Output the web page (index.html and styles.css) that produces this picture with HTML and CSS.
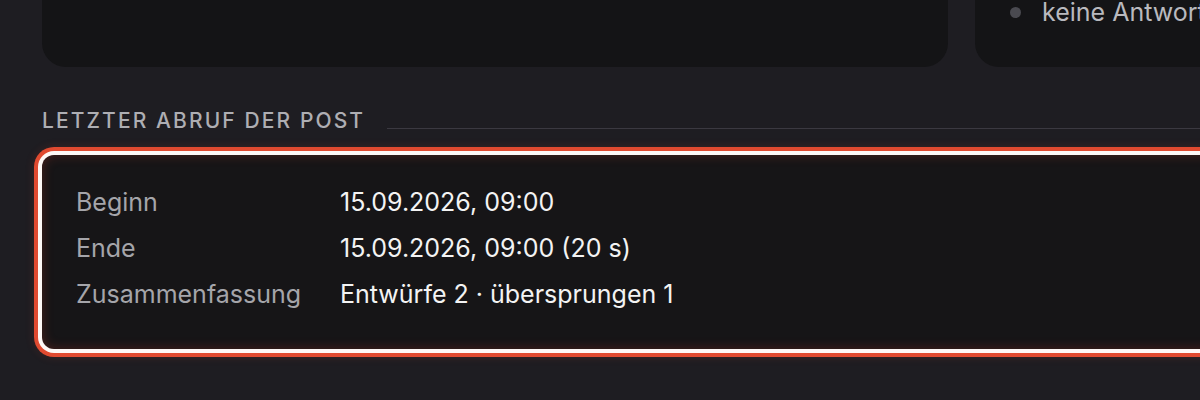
FILE: index.html
```html
<!DOCTYPE html>
<html lang="de">
<head>
<meta charset="utf-8">
<title>Letzter Abruf</title>
<link rel="stylesheet" href="styles.css">
</head>
<body>
<div class="page">
  <div class="top-row">
    <div class="card card-left"></div>
    <div class="card card-right">
      <ul class="status-list">
        <li><span class="dot"></span><span>keine Antwort</span></li>
      </ul>
    </div>
  </div>

  <div class="section-head">
    <h2>LETZTER ABRUF DER POST</h2>
    <div class="rule"></div>
  </div>

  <div class="run-card">
    <div class="row"><div class="label">Beginn</div><div class="value">15.09.2026, 09:00</div></div>
    <div class="row"><div class="label">Ende</div><div class="value">15.09.2026, 09:00 (20 s)</div></div>
    <div class="row"><div class="label">Zusammenfassung</div><div class="value">Entwürfe 2 · übersprungen 1</div></div>
  </div>
</div>
</body>
</html>
```

FILE: styles.css
```css
html, body {
  margin: 0;
  padding: 0;
  background: #1e1d22;
  overflow: hidden;
  height: 400px;
}
body {
  font-family: Inter, "Noto Sans", sans-serif;
  color: #f0f0f2;
}
.page {
  width: 1400px;
  padding-left: 42px;
}
.top-row {
  display: grid;
  grid-template-columns: 906px 400px;
  column-gap: 27px;
  margin-top: -60px;
}
.card {
  background: #141416;
  border-radius: 24px;
  height: 127px;
}
.status-list {
  list-style: none;
  margin: 0;
  padding: 58px 0 0 35px;
}
.status-list li {
  display: flex;
  align-items: center;
  gap: 21px;
  height: 28px;
  font-size: 25px;
  color: #b9b9be;
  white-space: nowrap;
}
.dot {
  flex: none;
  width: 11px;
  height: 11px;
  border-radius: 50%;
  background: #4a4a50;
}
.section-head {
  display: flex;
  align-items: flex-end;
  gap: 22px;
  margin-top: 41px;
  height: 26px;
}
.section-head h2 {
  margin: 0;
  font-size: 21px;
  font-weight: 500;
  letter-spacing: 2.1px;
  color: #aeaeb3;
  line-height: 26px;
  white-space: nowrap;
}
.rule {
  flex: 1;
  height: 1px;
  background: #3b3941;
  margin-bottom: 5px;
}
.run-card {
  margin-top: 21px;
  width: 1300px;
  background: #161517;
  border-radius: 12px;
  padding: 24px 0 32px 34px;
  box-shadow: inset 0 0 12px rgba(200, 60, 40, 0.3), 0 0 0 4px #fdf8f6, 0 0 0 8px #e04a30, 0 0 10px 8px rgba(224, 74, 48, 0.15);
}
.row {
  display: flex;
  height: 46px;
  align-items: center;
  font-size: 25px;
}
.label {
  width: 264px;
  color: #a5a5aa;
}
.value {
  color: #f3f3f3;
}
```
